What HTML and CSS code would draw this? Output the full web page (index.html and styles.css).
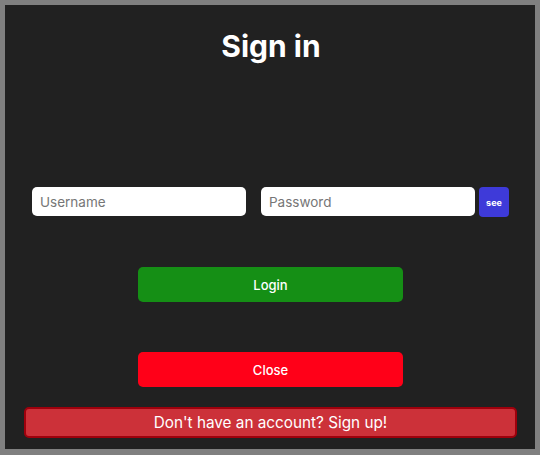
FILE: index.html
```html
<!DOCTYPE html>
<html>
<head>
<meta charset="utf-8">
<link rel="stylesheet" href="styles.css">
</head>
<body>
<div class="frame">
  <h1 class="title">Sign in</h1>
  <div class="fields">
    <input class="field" type="text" placeholder="Username">
    <div class="pass-group">
      <input class="field" type="password" placeholder="Password">
      <button class="see">see</button>
    </div>
  </div>
  <button class="btn btn-login">Login</button>
  <button class="btn btn-close">Close</button>
  <button class="signup">Don't have an account? Sign up!</button>
</div>
</body>
</html>
```
FILE: styles.css
```css
html, body {
  margin: 0;
  padding: 0;
  background: #808080;
  font-family: Inter, "Liberation Sans", sans-serif;
}
.frame {
  margin: 5px;
  height: 444px;
  background: #212121;
  display: flex;
  flex-direction: column;
  align-items: center;
  padding-top: 22px;
  box-sizing: border-box;
}
.title {
  margin: 0;
  font-size: 30px;
  line-height: 38px;
  font-weight: 700;
  color: #ffffff;
  margin-left: 2px;
}
.fields {
  margin-top: 122px;
  display: flex;
  align-items: flex-start;
  gap: 15px;
  margin-left: 1px;
}
.pass-group {
  display: flex;
  align-items: flex-start;
  gap: 4px;
}
.field {
  width: 214px;
  height: 29px;
  box-sizing: border-box;
  border: none;
  border-radius: 5px;
  background: #ffffff;
  padding: 0 8px;
  font-family: Inter, "Liberation Sans", sans-serif;
  font-size: 13.5px;
  color: #222;
  outline: none;
}
.field::placeholder {
  color: #767676;
}
.see {
  width: 30px;
  height: 30px;
  border: none;
  border-radius: 4px;
  background: #3e3ad9;
  color: #ffffff;
  font-family: Inter, "Liberation Sans", sans-serif;
  font-size: 9px;
  font-weight: 700;
  padding: 0;
}
.btn {
  width: 265px;
  height: 35px;
  margin-top: 50px;
  margin-left: 1px;
  border: none;
  border-radius: 5px;
  color: #ffffff;
  font-family: Inter, "Liberation Sans", sans-serif;
  font-size: 13px;
  font-weight: 500;
  padding: 0;
}
.btn-login {
  background: #158f15;
}
.btn-close {
  background: #ff0018;
}
.signup {
  margin-top: 20px;
  margin-left: 1px;
  width: 493px;
  height: 31px;
  box-sizing: border-box;
  background: #cc3139;
  border: 2px solid #9e000c;
  border-radius: 5px;
  color: #ffffff;
  font-family: Inter, "Liberation Sans", sans-serif;
  font-size: 15.3px;
  font-weight: 400;
  padding: 0;
}
```
